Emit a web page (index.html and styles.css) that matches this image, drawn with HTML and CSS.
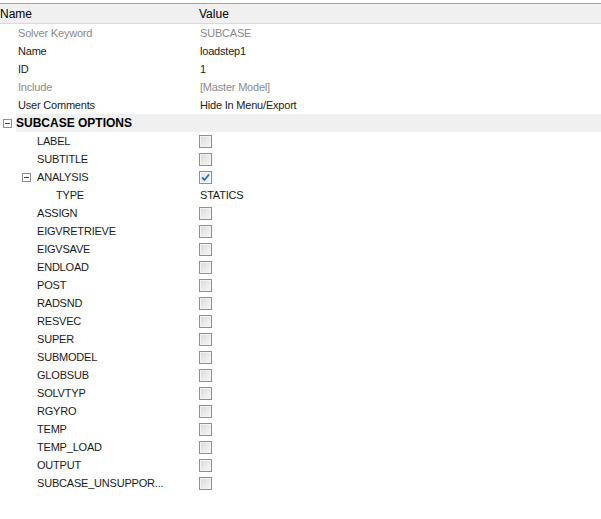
FILE: index.html
```html
<!DOCTYPE html>
<html>
<head>
<meta charset="utf-8">
<link rel="stylesheet" href="styles.css">
</head>
<body>
<div class="grid">
  <div class="header">
    <div class="hname">Name</div>
    <div class="hval">Value</div>
  </div>

  <div class="row"><div class="name lv1 dim">Solver Keyword</div><div class="val dim">SUBCASE</div></div>
  <div class="row"><div class="name lv1">Name</div><div class="val">loadstep1</div></div>
  <div class="row"><div class="name lv1">ID</div><div class="val">1</div></div>
  <div class="row"><div class="name lv1 dim">Include</div><div class="val dim">[Master Model]</div></div>
  <div class="row"><div class="name lv1">User Comments</div><div class="val">Hide In Menu/Export</div></div>

  <div class="row cat">
    <span class="exp exp0"></span>
    <div class="catlabel">SUBCASE OPTIONS</div>
  </div>

  <div class="row"><div class="name lv2">LABEL</div><div class="val"><span class="cb"></span></div></div>
  <div class="row"><div class="name lv2">SUBTITLE</div><div class="val"><span class="cb"></span></div></div>
  <div class="row"><div class="name lv2x"><span class="exp exp1"></span>ANALYSIS</div><div class="val"><span class="cb checked"><svg width="11" height="11" viewBox="0 0 11 11"><polyline points="2,5.5 4.5,8 9,2.5" fill="none" stroke="#3a6ea5" stroke-width="1.8"/></svg></span></div></div>
  <div class="row"><div class="name lv3">TYPE</div><div class="val">STATICS</div></div>
  <div class="row"><div class="name lv2">ASSIGN</div><div class="val"><span class="cb"></span></div></div>
  <div class="row"><div class="name lv2">EIGVRETRIEVE</div><div class="val"><span class="cb"></span></div></div>
  <div class="row"><div class="name lv2">EIGVSAVE</div><div class="val"><span class="cb"></span></div></div>
  <div class="row"><div class="name lv2">ENDLOAD</div><div class="val"><span class="cb"></span></div></div>
  <div class="row"><div class="name lv2">POST</div><div class="val"><span class="cb"></span></div></div>
  <div class="row"><div class="name lv2">RADSND</div><div class="val"><span class="cb"></span></div></div>
  <div class="row"><div class="name lv2">RESVEC</div><div class="val"><span class="cb"></span></div></div>
  <div class="row"><div class="name lv2">SUPER</div><div class="val"><span class="cb"></span></div></div>
  <div class="row"><div class="name lv2">SUBMODEL</div><div class="val"><span class="cb"></span></div></div>
  <div class="row"><div class="name lv2">GLOBSUB</div><div class="val"><span class="cb"></span></div></div>
  <div class="row"><div class="name lv2">SOLVTYP</div><div class="val"><span class="cb"></span></div></div>
  <div class="row"><div class="name lv2">RGYRO</div><div class="val"><span class="cb"></span></div></div>
  <div class="row"><div class="name lv2">TEMP</div><div class="val"><span class="cb"></span></div></div>
  <div class="row"><div class="name lv2">TEMP_LOAD</div><div class="val"><span class="cb"></span></div></div>
  <div class="row"><div class="name lv2">OUTPUT</div><div class="val"><span class="cb"></span></div></div>
  <div class="row"><div class="name lv2">SUBCASE_UNSUPPOR...</div><div class="val"><span class="cb"></span></div></div>
</div>
</body>
</html>
```

FILE: styles.css
```css
html, body {
  margin: 0;
  padding: 0;
  background: #ffffff;
}

body {
  font-family: "Liberation Sans", Arial, sans-serif;
  font-size: 11px;
  letter-spacing: -0.2px;
  color: #1a1a1a;
}

.grid {
  padding-top: 3px;
}

.header {
  display: grid;
  grid-template-columns: 199px 1fr;
  box-sizing: border-box;
  height: 21px;
  padding-top: 2px;
  border-top: 1px solid #a3a3a3;
  border-bottom: 1px solid #dadada;
  background: #f0f0f0;
  line-height: 17px;
  color: #000;
  font-size: 12px;
  letter-spacing: 0;
}

.row {
  display: grid;
  grid-template-columns: 199px 1fr;
  height: 18px;
  line-height: 18px;
  white-space: nowrap;
}

.name {
  overflow: hidden;
}

.lv1 { padding-left: 18px; }
.lv2 { padding-left: 37px; }
.lv3 { padding-left: 56px; }
.lv2x {
  padding-left: 22px;
  display: flex;
  align-items: center;
}

.val {
  display: flex;
  align-items: center;
  padding-left: 1px;
}

.dim { color: #8a8a8a; }

.cat {
  display: flex;
  align-items: center;
}

.catlabel {
  flex: 1;
  height: 18px;
  margin-left: 4px;
  background: #f0f0f0;
  font-weight: bold;
  font-size: 12px;
  letter-spacing: 0;
  color: #000;
}

.exp {
  position: relative;
  display: inline-block;
  box-sizing: border-box;
  width: 9px;
  height: 9px;
  border: 1px solid #8f8f8f;
  background: #ffffff;
  flex: none;
}

.exp::after {
  content: "";
  position: absolute;
  left: 1px;
  top: 3px;
  width: 5px;
  height: 1px;
  background: #404040;
}

.exp0 { margin-left: 3px; }
.exp1 { margin-right: 6px; }

.cb {
  display: inline-flex;
  align-items: center;
  justify-content: center;
  box-sizing: border-box;
  width: 13px;
  height: 13px;
  margin-left: -1px;
  border: 1px solid #8e8f8f;
  background: linear-gradient(135deg, #d8d8d8 0%, #ececec 60%, #f6f6f6 100%);
  box-shadow: inset 0 0 0 1px #f4f4f4;
}

.cb.checked {
  background: linear-gradient(135deg, #dde8f3 0%, #f0f5fa 100%);
  box-shadow: inset 0 0 0 1px #f6f9fc;
}
```
